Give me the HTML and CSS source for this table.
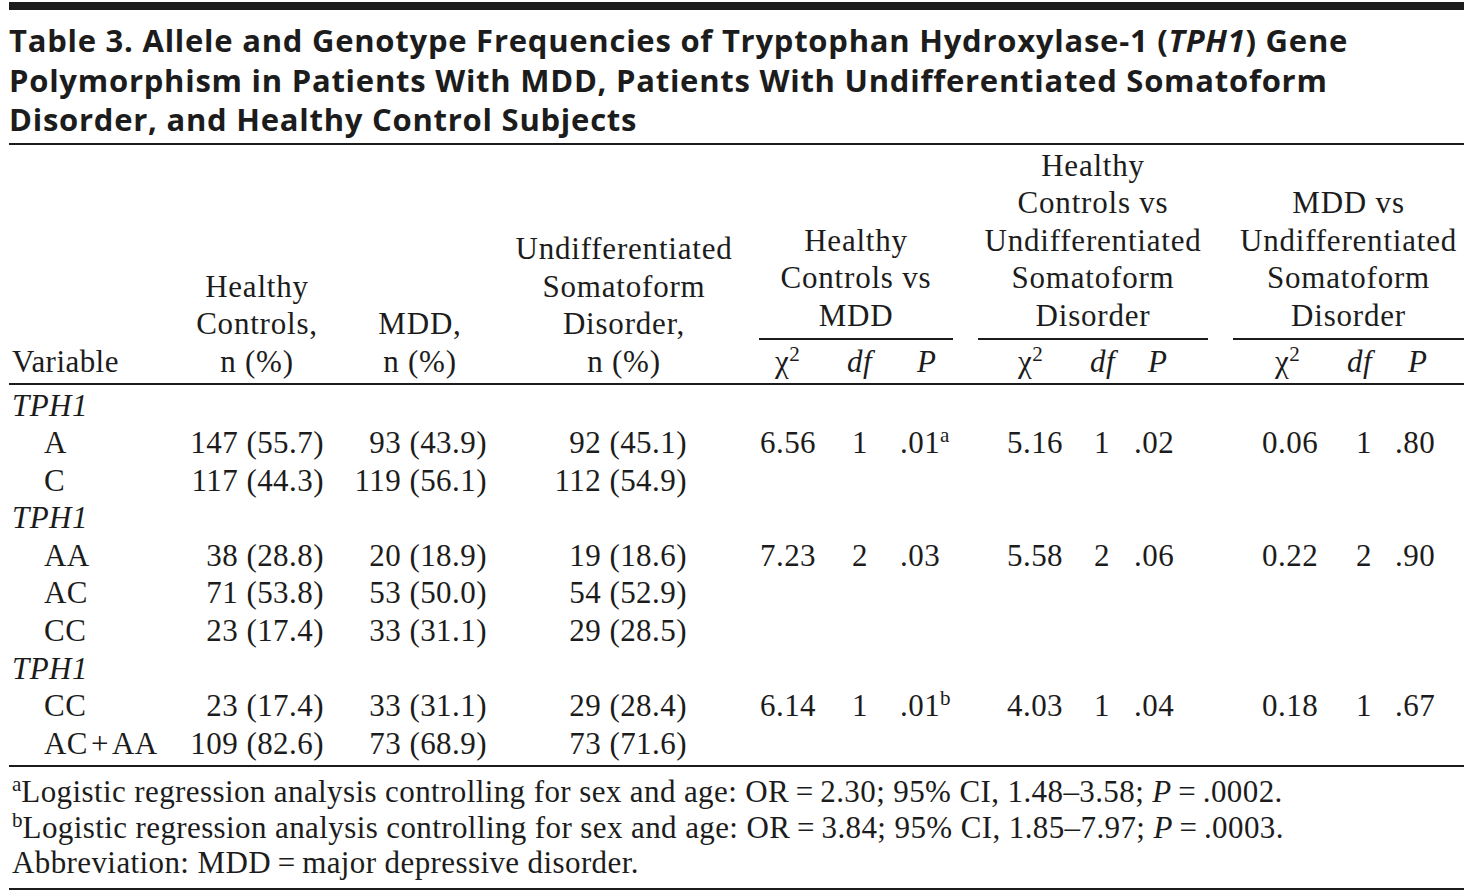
FILE: index.html
```html
<!DOCTYPE html>
<html>
<head>
<meta charset="utf-8">
<title>Table 3</title>
<link rel="stylesheet" href="styles.css">
</head>
<body>
<div class="page">
  <div class="topbar"></div>
  <h1 class="title">Table 3. Allele and Genotype Frequencies of Tryptophan Hydroxylase-1 (<i>TPH1</i>) Gene<br>Polymorphism in Patients With MDD, Patients With Undifferentiated Somatoform<br>Disorder, and Healthy Control Subjects</h1>
  <table class="data">
    <colgroup>
      <col class="w-var"><col class="w-hc"><col class="w-mdd"><col class="w-usd">
      <col class="w-c1"><col class="w-d"><col class="w-p1">
      <col class="w-gap">
      <col class="w-c2"><col class="w-d"><col class="w-p2">
      <col class="w-gap">
      <col class="w-c3"><col class="w-d"><col class="w-p3">
    </colgroup>
    <thead>
      <tr>
        <th rowspan="2" class="hv">Variable</th>
        <th rowspan="2" class="hm">Healthy<br>Controls,<br>n (%)</th>
        <th rowspan="2" class="hm">MDD,<br>n (%)</th>
        <th rowspan="2" class="hm hm-usd">Undifferentiated<br>Somatoform<br>Disorder,<br>n (%)</th>
        <th colspan="3" class="grp">Healthy<br>Controls vs<br>MDD</th>
        <th class="gap"></th>
        <th colspan="3" class="grp">Healthy<br>Controls vs<br>Undifferentiated<br>Somatoform<br>Disorder</th>
        <th class="gap"></th>
        <th colspan="3" class="grp">MDD vs<br>Undifferentiated<br>Somatoform<br>Disorder</th>
      </tr>
      <tr class="sub">
        <th class="hc hc1">χ<sup>2</sup></th><th class="hd hd1"><i>df</i></th><th class="hp hp1"><i>P</i></th>
        <th></th>
        <th class="hc hc2">χ<sup>2</sup></th><th class="hd hd2"><i>df</i></th><th class="hp hp2"><i>P</i></th>
        <th></th>
        <th class="hc hc3">χ<sup>2</sup></th><th class="hd hd3"><i>df</i></th><th class="hp hp3"><i>P</i></th>
      </tr>
    </thead>
    <tbody>
      <tr class="first">
        <td class="lab"><i>TPH1</i></td><td></td><td></td><td></td>
        <td></td><td></td><td></td><td></td><td></td><td></td><td></td><td></td><td></td><td></td><td></td>
      </tr>
      <tr>
        <td class="lab ind">A</td><td class="n n-hc">147 (55.7)</td><td class="n n-mdd">93 (43.9)</td><td class="n n-usd">92 (45.1)</td>
        <td class="c c1">6.56</td><td class="d">1</td><td class="p p1">.01<sup>a</sup></td><td></td>
        <td class="c c2">5.16</td><td class="d">1</td><td class="p p2">.02</td><td></td>
        <td class="c c3">0.06</td><td class="d">1</td><td class="p p3">.80</td>
      </tr>
      <tr>
        <td class="lab ind">C</td><td class="n n-hc">117 (44.3)</td><td class="n n-mdd">119 (56.1)</td><td class="n n-usd">112 (54.9)</td>
        <td></td><td></td><td></td><td></td><td></td><td></td><td></td><td></td><td></td><td></td><td></td>
      </tr>
      <tr>
        <td class="lab"><i>TPH1</i></td><td></td><td></td><td></td>
        <td></td><td></td><td></td><td></td><td></td><td></td><td></td><td></td><td></td><td></td><td></td>
      </tr>
      <tr>
        <td class="lab ind">AA</td><td class="n n-hc">38 (28.8)</td><td class="n n-mdd">20 (18.9)</td><td class="n n-usd">19 (18.6)</td>
        <td class="c c1">7.23</td><td class="d">2</td><td class="p p1">.03</td><td></td>
        <td class="c c2">5.58</td><td class="d">2</td><td class="p p2">.06</td><td></td>
        <td class="c c3">0.22</td><td class="d">2</td><td class="p p3">.90</td>
      </tr>
      <tr>
        <td class="lab ind">AC</td><td class="n n-hc">71 (53.8)</td><td class="n n-mdd">53 (50.0)</td><td class="n n-usd">54 (52.9)</td>
        <td></td><td></td><td></td><td></td><td></td><td></td><td></td><td></td><td></td><td></td><td></td>
      </tr>
      <tr>
        <td class="lab ind">CC</td><td class="n n-hc">23 (17.4)</td><td class="n n-mdd">33 (31.1)</td><td class="n n-usd">29 (28.5)</td>
        <td></td><td></td><td></td><td></td><td></td><td></td><td></td><td></td><td></td><td></td><td></td>
      </tr>
      <tr>
        <td class="lab"><i>TPH1</i></td><td></td><td></td><td></td>
        <td></td><td></td><td></td><td></td><td></td><td></td><td></td><td></td><td></td><td></td><td></td>
      </tr>
      <tr>
        <td class="lab ind">CC</td><td class="n n-hc">23 (17.4)</td><td class="n n-mdd">33 (31.1)</td><td class="n n-usd">29 (28.4)</td>
        <td class="c c1">6.14</td><td class="d">1</td><td class="p p1">.01<sup>b</sup></td><td></td>
        <td class="c c2">4.03</td><td class="d">1</td><td class="p p2">.04</td><td></td>
        <td class="c c3">0.18</td><td class="d">1</td><td class="p p3">.67</td>
      </tr>
      <tr class="last">
        <td class="lab ind">AC&#8202;+&#8202;AA</td><td class="n n-hc">109 (82.6)</td><td class="n n-mdd">73 (68.9)</td><td class="n n-usd">73 (71.6)</td>
        <td></td><td></td><td></td><td></td><td></td><td></td><td></td><td></td><td></td><td></td><td></td>
      </tr>
    </tbody>
  </table>
  <div class="notes">
    <p><sup>a</sup>Logistic regression analysis controlling for sex and age: OR&thinsp;=&thinsp;2.30; 95% CI, 1.48–3.58; <i>P</i>&thinsp;=&thinsp;.0002.</p>
    <p><sup>b</sup>Logistic regression analysis controlling for sex and age: OR&thinsp;=&thinsp;3.84; 95% CI, 1.85–7.97; <i>P</i>&thinsp;=&thinsp;.0003.</p>
    <p>Abbreviation: MDD&thinsp;=&thinsp;major depressive disorder.</p>
  </div>
</div>
</body>
</html>
```

FILE: styles.css
```css
html, body {
  margin: 0;
  padding: 0;
  background: #ffffff;
}
body {
  color: #1c1c1c;
  font-family: "Liberation Serif", "Times New Roman", serif;
}
.page {
  width: 1455px;
  margin-left: 9px;
}
.topbar {
  margin-top: 2px;
  height: 8px;
  background: #1c1c1c;
}
.title {
  margin: 0;
  padding: 11px 0 3px 0;
  font-family: "Open Sans", "Noto Sans", sans-serif;
  font-weight: 700;
  font-size: 31px;
  letter-spacing: 0.75px;
  line-height: 39.5px;
  white-space: nowrap;
  border-bottom: 2px solid #1c1c1c;
}
.title i {
  font-style: italic;
}
.data {
  width: 1455px;
  table-layout: fixed;
  border-collapse: separate;
  border-spacing: 0;
  font-size: 31px;
  line-height: 37.5px;
  letter-spacing: 0.45px;
}
.w-var { width: 163px; }
.w-hc { width: 170px; }
.w-mdd { width: 156px; }
.w-usd { width: 261px; }
.w-c1 { width: 76px; }
.w-d { width: 50px; }
.w-p1 { width: 68px; }
.w-gap { width: 25px; }
.w-c2 { width: 99px; }
.w-p2 { width: 81px; }
.w-c3 { width: 106px; }
.w-p3 { width: 75px; }

th {
  font-weight: 400;
  padding: 0;
  white-space: nowrap;
}
thead tr:first-child th {
  vertical-align: bottom;
  letter-spacing: 0.8px;
}
th.hv, th.hm {
  border-bottom: 2px solid #1c1c1c;
  padding-bottom: 2.5px;
}
th.hv {
  text-align: left;
  padding-left: 3px;
  letter-spacing: 0.45px !important;
}
th.hm {
  text-align: center;
}
th.hm-usd {
  padding-right: 9px;
}
th.grp {
  text-align: center;
  padding-top: 2px;
  padding-bottom: 3.5px;
  border-bottom: 2px solid #1c1c1c;
}
th.gap {
  border: 0;
}
tr.sub th {
  padding-top: 3px;
  padding-bottom: 2.5px;
  border-bottom: 2px solid #1c1c1c;
  text-align: left;
}
sup {
  font-size: 0.68em;
  line-height: 0;
  vertical-align: 0.5em;
  letter-spacing: 0;
}
tr.sub th.hc1 { padding-left: 16px; }
tr.sub th.hc2 { padding-left: 40px; }
tr.sub th.hc3 { padding-left: 42px; }
tr.sub th.hd1 { padding-left: 12px; }
tr.sub th.hd2 { padding-left: 13px; }
tr.sub th.hd3 { padding-left: 8px; }
tr.sub th.hp1 { padding-left: 32px; }
tr.sub th.hp2 { padding-left: 21px; }
tr.sub th.hp3 { padding-left: 19px; }

td {
  padding: 0;
  line-height: 37.6px;
  white-space: nowrap;
}
tr.first td {
  padding-top: 2px;
}
tr.last td {
  padding-bottom: 3px;
  border-bottom: 2px solid #1c1c1c;
}
td.lab {
  padding-left: 3px;
}
td.lab.ind {
  padding-left: 35px;
}
td.n {
  text-align: right;
}
td.n-hc { padding-right: 18px; }
td.n-mdd { padding-right: 11px; }
td.n-usd { padding-right: 72px; }
td.c1 { padding-left: 1px; }
td.c2 { padding-left: 29px; }
td.c3 { padding-left: 29px; }
td.d {
  text-align: center;
}
td.p1 { padding-left: 15px; }
td.p2 { padding-left: 7px; }
td.p3 { padding-left: 6px; }

.notes {
  padding: 7px 0 7px 3px;
  border-bottom: 2px solid #1c1c1c;
  font-size: 31px;
  line-height: 35.5px;
  letter-spacing: 0.4px;
}
.notes p {
  margin: 0;
  white-space: nowrap;
}
```
